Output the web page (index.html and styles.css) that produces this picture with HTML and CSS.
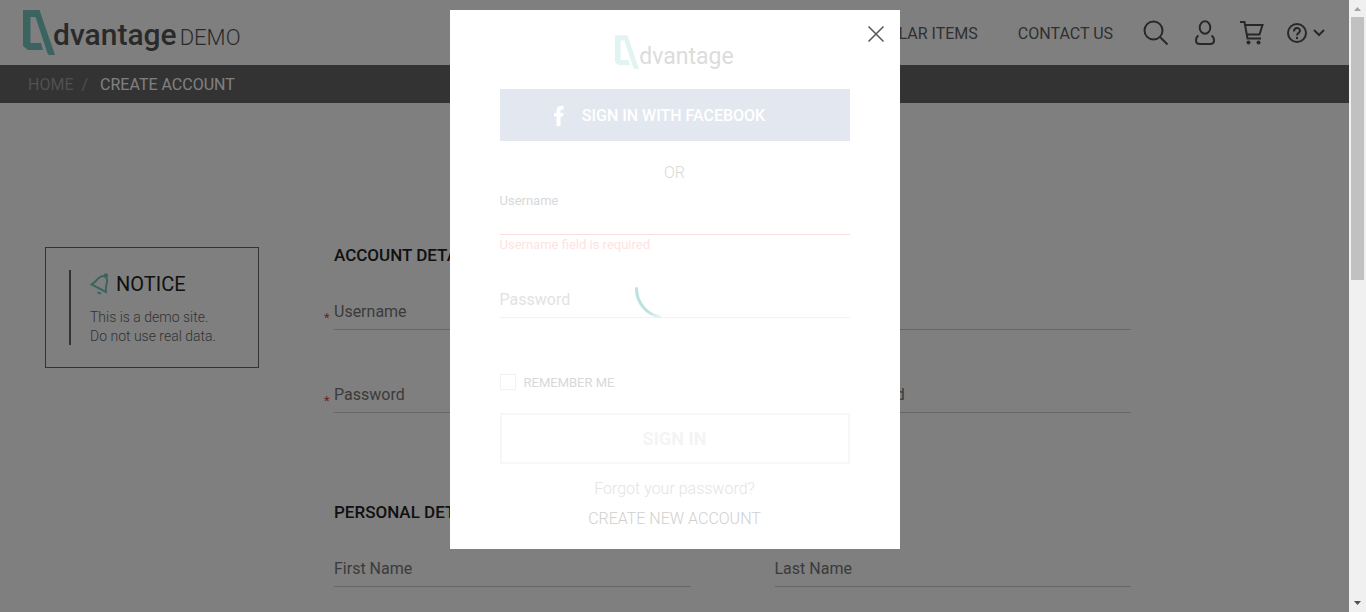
FILE: index.html
```html
<!DOCTYPE html>
<html lang="en">
<head>
<meta charset="utf-8">
<title>Advantage DEMO</title>
<link rel="stylesheet" href="styles.css">
</head>
<body>
<div class="page">
  <header class="header">
    <a class="logo" href="#">
      <svg class="logo-mark" viewBox="0 0 32 45" aria-hidden="true"><path fill="#77c9c0" fill-rule="evenodd" d="M0 0H16.500L32 45H26.500Q25 45 24.200 42.500L12.500 7H7.500V33H18L20 40H5L0 36Z"/></svg>
      <span class="logo-name">dvantage</span><span class="logo-demo">DEMO</span>
    </a>
    <nav class="nav">
      <a href="#">POPULAR ITEMS</a>
      <a href="#">CONTACT US</a>
    </nav>
    <div class="tools">
      <button class="tool" aria-label="Search"><svg width="26" height="26" viewBox="0 0 26 26"><circle cx="10.500" cy="10.500" r="9"/><path d="M17 17l7.500 7.500"/></svg></button>
      <button class="tool tool-user" aria-label="User"><svg width="20" height="26" viewBox="0 0 20 26"><ellipse cx="10" cy="7.500" rx="5.300" ry="6.300"/><path d="M3.500 15.500C1 17 1 19 1 20.500Q1 24 5 24H15Q19 24 19 20.500C19 19 19 17 16.500 15.500"/></svg></button>
      <button class="tool tool-cart" aria-label="Cart"><svg width="26" height="26" viewBox="0 0 26 26"><path d="M1 2H5.500L8.500 18.500H22M6 5H23.500L20.500 14.500H8"/><circle class="dot" cx="9.500" cy="22.500" r="2"/><circle class="dot" cx="19.500" cy="22.500" r="2"/></svg></button>
      <button class="tool tool-help" aria-label="Help"><svg width="40" height="22" viewBox="0 0 40 22"><circle cx="11" cy="11" r="9"/><path d="M8 9.500C8 5 14 5 14 8.800C14 11 11 10.800 11 13.500"/><circle class="dot" cx="11" cy="16" r="1.200"/><path d="M28 8l5 5 5-5"/></svg></button>
    </div>
  </header>
  <div class="crumbs">
    <a href="#">HOME</a><span>/</span><b>CREATE ACCOUNT</b>
  </div>
  <main class="main">
    <aside class="notice">
      <div class="notice-body">
        <h2><svg width="20" height="22" viewBox="0 0 20 22" aria-hidden="true"><path d="M1.500 11.500C6 9.500 8 3 13.500 3Q17.500 3.500 17 9Q15.500 14 16 19Z"/><circle cx="16" cy="2.500" r="1.200"/><path d="M7.500 19q1.500 2 3.500 1"/></svg>NOTICE</h2>
        <p>This is a demo site.<br>Do not use real data.</p>
      </div>
    </aside>
    <form class="form">
      <section class="group">
        <h3>ACCOUNT DETAILS</h3>
        <div class="field required"><label for="user">Username</label><input id="user"></div>
        <div class="field required"><label for="mail">Email</label><input id="mail"></div>
        <div class="field required"><label for="pass">Password</label><input id="pass" type="password"></div>
        <div class="field required"><label for="confirm">Confirm password</label><input id="confirm" type="password"></div>
      </section>
      <section class="group">
        <h3>PERSONAL DETAILS</h3>
        <div class="field"><label for="first">First Name</label><input id="first"></div>
        <div class="field"><label for="last">Last Name</label><input id="last"></div>
      </section>
    </form>
  </main>
  <div class="overlay">
    <div class="modal" role="dialog" aria-label="Sign in">
      <button class="close" aria-label="Close"><svg width="16" height="16" viewBox="0 0 16 16"><path d="M.5.5l15 15M15.500.5l-15 15"/></svg></button>
      <div class="modal-logo">
        <svg viewBox="0 0 32 45" width="24" height="34" aria-hidden="true"><path fill="#e1f4f2" fill-rule="evenodd" d="M0 0H16.500L32 45H26.500Q25 45 24.200 42.500L12.500 7H7.500V33H18L20 40H5L0 36Z"/></svg>
        <span>dvantage</span>
      </div>
      <button class="facebook"><svg width="10" height="20" viewBox="0 0 10 20" aria-hidden="true"><path fill="#fff" d="M2.500 20V10.500H0V7H2.500V4.500Q2.500 0 7 0H9.500V3.500H8Q6.500 3.500 6.500 5V7H9.500L9 10.500H6.500V20Z"/></svg>SIGN IN WITH FACEBOOK</button>
      <p class="or">OR</p>
      <div class="login login-user"><label for="login-user">Username</label><input id="login-user"></div>
      <p class="error">Username field is required</p>
      <div class="login login-pass"><label for="login-pass">Password</label><input id="login-pass" type="password"></div>
      <label class="remember"><input type="checkbox">REMEMBER ME</label>
      <button class="signin">SIGN IN</button>
      <a class="forgot" href="#">Forgot your password?</a>
      <a class="create" href="#">CREATE NEW ACCOUNT</a>
      <svg class="loader" viewBox="0 0 60 60" aria-hidden="true"><defs><linearGradient id="fade" x1="0" y1="0" x2="1" y2="0"><stop offset=".5" stop-color="#bce2df"/><stop offset="1" stop-color="#bce2df" stop-opacity=".3"/></linearGradient></defs><path d="M1.500 30.500C1.500 45 12 57 25 58.500" fill="none" stroke="url(#fade)" stroke-width="3" stroke-linecap="round"/></svg>
    </div>
  </div>
</div>
<div class="scrollbar" aria-hidden="true">
  <svg width="17" height="17" viewBox="0 0 17 17"><path fill="#a3a3a3" d="M5 11h7L8.500 7z"/></svg>
  <div class="thumb"></div>
  <svg class="down" width="17" height="17" viewBox="0 0 17 17"><path fill="#505050" d="M5 6h7L8.500 10z"/></svg>
</div>
</body>
</html>
```
FILE: styles.css
```css
* { box-sizing: border-box; }
body { margin: 0; display: flex; height: 100vh; overflow: hidden; background: #fff; font: 300 16px/20px Roboto, sans-serif; color: #555; }
h2, h3, p { margin: 0; }
a { color: inherit; text-decoration: none; }
button { border: 0; padding: 0; background: none; font: inherit; color: inherit; }
input { font: inherit; }
.page { flex: 1; position: relative; overflow: hidden; }

.header { display: flex; align-items: center; height: 65px; padding: 0 23px; }
.logo { display: flex; align-items: baseline; line-height: 40px; color: #555; }
.logo-mark { width: 32px; height: 45px; align-self: center; margin-right: -2px; }
.logo-name { font-size: 30px; font-weight: 500; }
.logo-demo { font-size: 22px; margin-left: 3px; }
.logo-name, .logo-demo { padding-top: 8px; }
.nav { display: flex; gap: 40px; margin-left: auto; padding-top: 2px; font-weight: 400; color: #606060; }
.tools { display: flex; align-items: center; margin-left: 30px; }
.tool { display: flex; }
.tool svg { fill: none; stroke: #505050; stroke-width: 2; }
.tool .dot { fill: #505050; stroke: none; }
.tool-user { margin-left: 26px; }
.tool-cart { margin-left: 24px; }
.tool-help { margin-left: 21px; }

.crumbs { display: flex; align-items: center; gap: 8px; height: 38px; padding: 2px 28px 0; background: #666; color: #a0a0a0; font-weight: 400; }
.crumbs b { color: #fff; font-weight: 400; margin-left: 4px; }

.main { display: flex; align-items: flex-start; gap: 75px; padding: 144px 218px 0 45px; }
.notice { flex: 0 0 214px; padding: 22px 23px; border: 1px solid #666; }
.notice-body { height: 75px; padding-left: 19px; border-left: 2px solid #666; }
.notice h2 { display: flex; align-items: center; gap: 6px; height: 28px; font-size: 20px; font-weight: 400; color: #222; }
.notice svg { fill: none; stroke: #77c9c0; stroke-width: 2; }
.notice p { padding-top: 10px; font-size: 14px; line-height: 19px; white-space: nowrap; color: #666; }

.form { flex: 1; display: grid; gap: 91px; }
.group { display: grid; grid-template-columns: 1fr 1fr; gap: 47px 84px; }
.group h3 { grid-column: 1 / -1; margin-bottom: -16px; font-size: 17px; line-height: 16px; font-weight: 500; color: #222; }
.field { display: grid; position: relative; height: 36px; border-bottom: 1px solid #ccc; }
.field label, .field input { grid-area: 1 / 1; align-self: center; }
.field label { font-weight: 400; color: #777; }
.field input { width: 100%; border: 0; background: none; }
.required::before { content: "*"; position: absolute; left: -10px; top: 14px; font-size: 13px; color: #d44; font-weight: 400; }

.overlay { position: absolute; inset: 0; padding-top: 10px; background: rgba(0, 0, 0, 0.5); }
.modal { position: relative; display: flex; flex-direction: column; width: 450px; margin: 0 auto; padding: 25px 50px 20px; background: #fff; color: #d8d8d8; }
.close { position: absolute; top: 16px; right: 16px; display: flex; }
.close svg { fill: none; stroke: #555; stroke-width: 1.5; }
.modal-logo { display: flex; justify-content: center; height: 34px; font-size: 23px; font-weight: 400; line-height: 43px; color: #dcdcdc; }
.facebook { display: flex; align-items: center; justify-content: center; gap: 18px; height: 52px; margin-top: 20px; padding: 1px 30px 0 0; background: #e2e7f0; color: #fff; font-weight: 500; }
.or { margin-top: 22px; text-align: center; }
.login { display: grid; border-bottom: 1px solid #f2f2f2; }
.login label, .login input { grid-area: 1 / 1; }
.login input { width: 100%; border: 0; background: none; }
.login-user { height: 44px; margin-top: 8px; border-color: #fddede; }
.login-user label { font-size: 13px; font-weight: 400; }
.error { font-size: 13px; font-weight: 400; color: #ffe2e2; }
.login-pass { height: 28px; margin-top: 35px; color: #e2e2e2; }
.login-pass label { font-weight: 400; }
.remember { display: flex; align-items: center; gap: 8px; height: 20px; margin-top: 55px; font-size: 13px; font-weight: 400; }
.remember input { appearance: none; width: 16px; height: 16px; margin: 0 0 2px; border: 1px solid #f2f2f2; }
.signin { height: 51px; margin-top: 20px; border: 2px solid #f7f7f7; font-size: 18px; font-weight: 700; color: #f4f4f4; }
.forgot, .create { align-self: center; }
.forgot { margin-top: 15px; color: #e4e4e4; }
.create { margin-top: 10px; color: #d0d0d0; }
.loader { position: absolute; left: 185px; top: 248px; width: 60px; height: 60px; }

.scrollbar { flex: 0 0 17px; display: flex; flex-direction: column; background: #f0f0f0; }
.thumb { height: 43%; margin: 0 2px; background: #c1c1c1; }
.down { margin-top: auto; }
```
